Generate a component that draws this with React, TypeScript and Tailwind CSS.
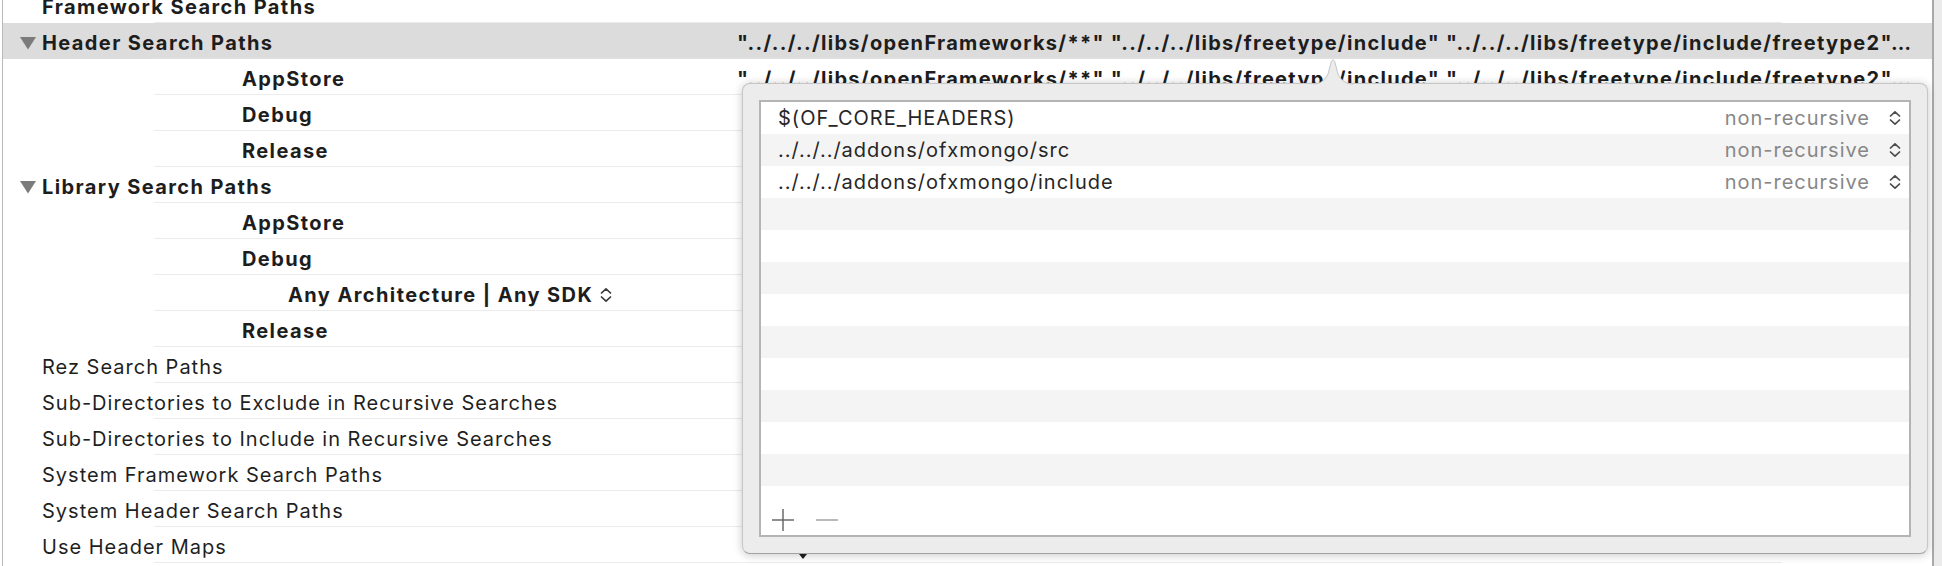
import React from "react";

type Row = {
  label: string;
  level?: 0 | 1 | 2;
  bold?: boolean;
  open?: boolean;
  selected?: boolean;
  chevron?: boolean;
  value?: string;
  marker?: boolean;
};

const HEADER_VALUE =
  '"../../../libs/openFrameworks/**" "../../../libs/freetype/include" "../../../libs/freetype/include/freetype2"…';

const rows: Row[] = [
  { label: "Framework Search Paths", bold: true },
  { label: "Header Search Paths", bold: true, open: true, selected: true, value: HEADER_VALUE },
  { label: "AppStore", level: 1, bold: true, value: HEADER_VALUE },
  { label: "Debug", level: 1, bold: true },
  { label: "Release", level: 1, bold: true },
  { label: "Library Search Paths", bold: true, open: true },
  { label: "AppStore", level: 1, bold: true },
  { label: "Debug", level: 1, bold: true },
  { label: "Any Architecture | Any SDK", level: 2, bold: true, chevron: true },
  { label: "Release", level: 1, bold: true },
  { label: "Rez Search Paths" },
  { label: "Sub-Directories to Exclude in Recursive Searches" },
  { label: "Sub-Directories to Include in Recursive Searches" },
  { label: "System Framework Search Paths" },
  { label: "System Header Search Paths" },
  { label: "Use Header Maps", marker: true },
  { label: "" },
];

const paths = [
  "$(OF_CORE_HEADERS)",
  "../../../addons/ofxmongo/src",
  "../../../addons/ofxmongo/include",
];

function UpDown({ className }: { className?: string }) {
  return (
    <svg width="14" height="16" viewBox="0 0 14 16" fill="none" stroke="currentColor" strokeWidth="1.7" strokeLinecap="round" strokeLinejoin="round" className={className}>
      <path d="M2.5 6 7 1.8 11.5 6" />
      <path d="M2.5 10 7 14.2 11.5 10" />
    </svg>
  );
}

function Disclosure() {
  return (
    <svg width="16" height="13" viewBox="0 0 16 13" className="shrink-0">
      <polygon points="0,0 16,0 8,12.5" fill="#7b7b7b" />
    </svg>
  );
}

function SettingRow({ row }: { row: Row }) {
  const level = row.level ?? 0;
  return (
    <div className={row.selected ? "flex flex-col bg-[#dcdcdc]" : "flex flex-col"}>
      <div className="flex h-[35px] items-center pt-[5px]">
        <div
          className={
            level === 0
              ? row.open
                ? "flex w-[734px] shrink-0 items-center gap-[6px] pl-[17px]"
                : "flex w-[734px] shrink-0 items-center pl-[39px]"
              : level === 1
              ? "flex w-[734px] shrink-0 items-center pl-[239px]"
              : "flex w-[734px] shrink-0 items-center pl-[285px]"
          }
        >
          {row.open && <Disclosure />}
          <span
            className={
              row.bold
                ? "whitespace-nowrap font-bold tracking-[1.4px] text-[#1d1d1d]"
                : "whitespace-nowrap tracking-[1px] text-[#1f1f1f]"
            }
          >
            {row.label}
          </span>
          {row.chevron && <UpDown className="ml-[6px] text-[#3a3a3a]" />}
        </div>
        {row.value && (
          <span className="whitespace-nowrap font-bold tracking-[1.3px] text-[#1d1d1d]">{row.value}</span>
        )}
        {row.marker && (
          <div className="self-start pl-[62px] pt-[22px]">
            <svg width="8" height="5" viewBox="0 0 8 5">
              <polygon points="0,0 8,0 4,5" fill="#1f1f1f" />
            </svg>
          </div>
        )}
      </div>
      <div className={row.selected ? "ml-[151px] h-px w-[1628px] bg-[#e2e2e2]" : "ml-[151px] h-px w-[1628px] bg-[#ebebeb]"} />
    </div>
  );
}

export default function App() {
  return (
    <div className="relative flex h-[566px] w-[1942px] overflow-hidden bg-white font-['Inter','Liberation_Sans',sans-serif] text-[20px]">
      <div className="ml-[2px] h-full w-[1932px] shrink-0 border-l border-r-2 border-l-[#b9b9b9] border-r-[#a9a9a9]">
        <div className="-mt-[13px] flex flex-col">
          {rows.map((row, i) => (
            <SettingRow key={i} row={row} />
          ))}
        </div>
      </div>
      <div className="flex-1 bg-[#ebebeb]" />

      {/* popover */}
      <div className="absolute left-[742px] top-[83px] flex h-[471px] w-[1186px] flex-col rounded-[8px] border border-[#c6c6c6] border-b-[#a3a3a3] bg-[#ececec] p-[16px] shadow-[0_1px_10px_rgba(0,0,0,0.22)]">
        <div className="relative flex flex-1 flex-col overflow-hidden border-2 border-[#b4b4b4] bg-white">
          {Array.from({ length: 13 }).map((_, i) => (
            <div
              key={i}
              className={i % 2 === 1 ? "flex h-[32px] shrink-0 items-center bg-[#f4f4f4] pl-[17px] pr-[7px]" : "flex h-[32px] shrink-0 items-center bg-white pl-[17px] pr-[7px]"}
            >
              {paths[i] && (
                <>
                  <span className="flex-1 whitespace-nowrap tracking-[1px] text-[#262626]">{paths[i]}</span>
                  <span className="whitespace-nowrap tracking-[1px] text-[#878787]">non-recursive</span>
                  <UpDown className="ml-[18px] text-[#4a4a4a]" />
                </>
              )}
            </div>
          ))}
          <div className="absolute bottom-[4px] left-[11px] flex items-center gap-[22px]">
            <svg width="22" height="22" viewBox="0 0 22 22" stroke="#6b6b6b" strokeWidth="1.5">
              <path d="M11 0v22M0 11h22" />
            </svg>
            <svg width="22" height="22" viewBox="0 0 22 22" stroke="#bababa" strokeWidth="2">
              <path d="M0 11h22" />
            </svg>
          </div>
        </div>
      </div>

      {/* popover arrow */}
      <svg className="absolute left-[1313px] top-[58px]" width="40" height="27" viewBox="0 0 40 27">
        <path d="M0 27 V26 C8 26 12 22 15 16 L18.4 3.2 Q20 0.2 21.6 3.2 L25 16 C28 22 32 26 40 26 V27 Z" fill="#ececec" />
        <path d="M0 26 C8 26 12 22 15 16 L18.4 3.2 Q20 0.2 21.6 3.2 L25 16 C28 22 32 26 40 26" fill="none" stroke="#c6c6c6" strokeWidth="1" />
      </svg>
    </div>
  );
}
